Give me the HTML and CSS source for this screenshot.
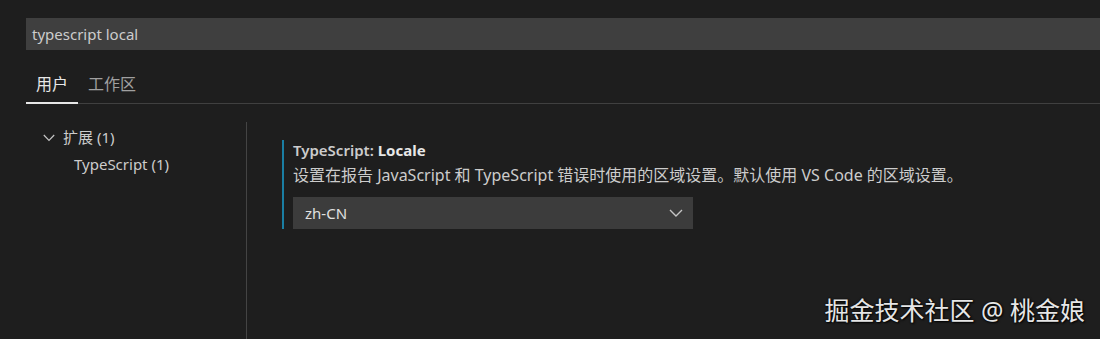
FILE: index.html
```html
<!DOCTYPE html>
<html lang="zh-CN">
<head>
    <meta charset="UTF-8">
    <title>设置</title>
    <link rel="stylesheet" href="styles.css">
</head>
<body>
<div class="settings">
    <div class="search">typescript local</div>
    <ul class="tabs">
        <li class="select">用户</li>
        <li>工作区</li>
    </ul>
    <div class="body">
        <div class="tree">
            <div class="row">
                <svg class="twist" width="12" height="8" viewBox="0 0 12 8">
                    <path d="M0.8 1 L6 6.4 L11.2 1" fill="none" stroke="#c5c5c5" stroke-width="1.2"/>
                </svg>
                <span>扩展 (1)</span>
            </div>
            <div class="row child">TypeScript (1)</div>
        </div>
        <div class="list">
            <div class="item">
                <div class="title">TypeScript: <b>Locale</b></div>
                <div class="desc">设置在报告 JavaScript 和 TypeScript 错误时使用的区域设置。默认使用 VS Code 的区域设置。</div>
                <div class="dropdown">
                    <span>zh-CN</span>
                    <svg width="14" height="8" viewBox="0 0 14 8">
                        <path d="M1 1 L7 7 L13 1" fill="none" stroke="#c5c5c5" stroke-width="1.4"/>
                    </svg>
                </div>
            </div>
        </div>
    </div>
</div>
<div class="mark">掘金技术社区 @ 桃金娘</div>
</body>
</html>
```

FILE: styles.css
```css
*{
    padding: 0;
    margin: 0;
}
li{
    list-style: none;
}
html,body{
    height: 100%;
    overflow: hidden;
}
body{
    background: #1e1e1e;
    color: #cccccc;
    font-family: "Noto Sans", "Noto Sans CJK SC", sans-serif;
    font-size: 15px;
}
.settings{
    padding: 18px 0 0 26px;
    height: 100%;
    box-sizing: border-box;
    display: flex;
    flex-direction: column;
}
.search{
    height: 32px;
    line-height: 32px;
    background: #3f3f3f;
    padding-left: 6px;
    font-size: 15px;
    color: #cccccc;
}
.tabs{
    display: flex;
    margin-top: 19px;
    border-bottom: 1px solid #404040;
}
.tabs li{
    padding: 0 10px;
    height: 35px;
    line-height: 31px;
    font-size: 16px;
    color: #a0a0a0;
    margin-bottom: -1px;
    border-bottom: 2px solid transparent;
    box-sizing: border-box;
}
.tabs li.select{
    color: #e7e7e7;
    border-bottom-color: #e7e7e7;
}
.body{
    flex: 1;
    display: flex;
    padding-top: 18px;
}
.tree{
    width: 220px;
    border-right: 1px solid #444444;
    padding-top: 2px;
}
.row{
    height: 27px;
    line-height: 27px;
    display: flex;
    align-items: center;
    padding-left: 17px;
}
.row .twist{
    margin-right: 8px;
}
.row.child{
    padding-left: 48px;
}
.list{
    padding: 18px 0 0 35px;
}
.item{
    border-left: 2px solid #1a7ea3;
    padding-left: 9px;
}
.title{
    line-height: 20px;
    font-weight: 600;
    color: #cccccc;
}
.title b{
    font-weight: 700;
    color: #e7e7e7;
}
.desc{
    margin-top: 4px;
    line-height: 22px;
    font-size: 16px;
}
.dropdown{
    margin-top: 11px;
    width: 400px;
    height: 32px;
    background: #3c3c3c;
    display: flex;
    align-items: center;
    justify-content: space-between;
    padding: 0 10px 0 12px;
    box-sizing: border-box;
    color: #e0e0e0;
}
.mark{
    position: absolute;
    right: 15px;
    bottom: 14px;
    font-size: 25px;
    line-height: 30px;
    color: #e6e6e6;
    text-shadow: 0 0 2px #000, 1px 1px 2px #000;
}
```
